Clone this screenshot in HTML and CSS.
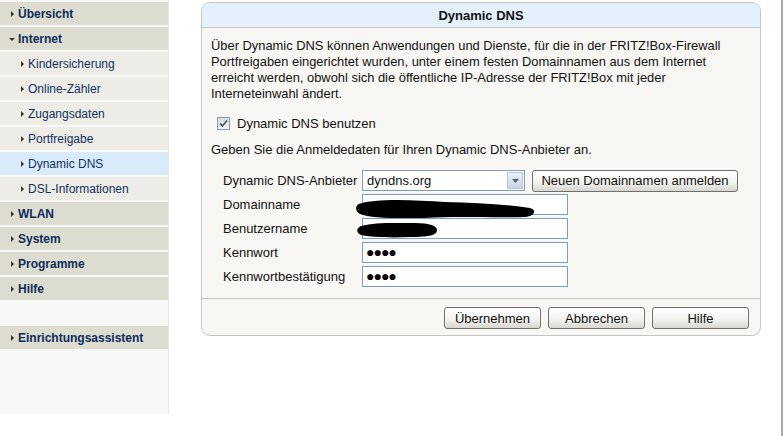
FILE: index.html
```html
<!DOCTYPE html>
<html lang="de">
<head>
  <meta charset="UTF-8">
  <title>Dynamic DNS</title>
  <link rel="stylesheet" href="styles.css">
</head>
<body>

  <div class="page">
    <ul class="menu">
      <li class="main"><a href="#">Übersicht</a></li>
      <li class="main open"><a href="#">Internet</a></li>
      <li class="sub"><a href="#">Kindersicherung</a></li>
      <li class="sub"><a href="#">Online-Zähler</a></li>
      <li class="sub"><a href="#">Zugangsdaten</a></li>
      <li class="sub"><a href="#">Portfreigabe</a></li>
      <li class="sub active"><a href="#">Dynamic DNS</a></li>
      <li class="sub"><a href="#">DSL-Informationen</a></li>
      <li class="main"><a href="#">WLAN</a></li>
      <li class="main"><a href="#">System</a></li>
      <li class="main"><a href="#">Programme</a></li>
      <li class="main"><a href="#">Hilfe</a></li>
      <li class="spacer"></li>
      <li class="main"><a href="#">Einrichtungsassistent</a></li>
    </ul>

    <div class="content">
      <div class="box">
        <div class="box-head">Dynamic DNS</div>
        <div class="box-body">
          <p class="intro">Über Dynamic DNS können Anwendungen und Dienste, für die in der FRITZ!Box-Firewall
            Portfreigaben eingerichtet wurden, unter einem festen Domainnamen aus dem Internet
            erreicht werden, obwohl sich die öffentliche IP-Adresse der FRITZ!Box mit jeder
            Interneteinwahl ändert.</p>

          <label class="check">
            <span class="checkbox"><svg width="9" height="9" viewBox="0 0 9 9"><path d="M1 4.5 L3.5 7 L8 1.5" fill="none" stroke="#4a5a7a" stroke-width="1.8"/></svg></span>
            Dynamic DNS benutzen
          </label>

          <p class="hint">Geben Sie die Anmeldedaten für Ihren Dynamic DNS-Anbieter an.</p>

          <div class="form">
            <div class="row">
              <label>Dynamic DNS-Anbieter</label>
              <div class="select">
                <span>dyndns.org</span>
                <span class="arrow"><svg width="7" height="4" viewBox="0 0 7 4"><path d="M0 0 H7 L3.5 4 Z" fill="#4d6185"/></svg></span>
              </div>
              <button class="btn wide">Neuen Domainnamen anmelden</button>
            </div>
            <div class="row">
              <label>Domainname</label>
              <div class="field">
                <svg class="scribble" width="190" height="24" viewBox="0 0 190 24">
                  <path d="M4 8 C20 2 60 4 90 6 C120 7 150 8 175 12 C182 14 180 20 170 21 C140 22 100 20 70 22 C40 23 15 22 5 18 C0 15 0 10 4 8 Z" fill="#000"/>
                </svg>
              </div>
            </div>
            <div class="row">
              <label>Benutzername</label>
              <div class="field">
                <svg class="scribble" width="90" height="20" viewBox="0 0 90 20">
                  <path d="M6 6 C20 2 40 3 60 3 C75 3 82 6 82 10 C82 15 75 17 55 17 C35 18 15 17 6 15 C1 13 1 8 6 6 Z" fill="#000"/>
                </svg>
              </div>
            </div>
            <div class="row">
              <label>Kennwort</label>
              <div class="field dots">●●●●</div>
            </div>
            <div class="row">
              <label>Kennwortbestätigung</label>
              <div class="field dots">●●●●</div>
            </div>
          </div>
        </div>
        <div class="box-foot">
          <button class="btn">Übernehmen</button>
          <button class="btn">Abbrechen</button>
          <button class="btn">Hilfe</button>
        </div>
      </div>
    </div>
  </div>

</body>
</html>
```

FILE: styles.css
```css
body {
  margin: 0;
  background: #fff;
  font-family: "Liberation Sans", Arial, sans-serif;
  font-size: 13px;
  color: #111;
}

.page {
  display: flex;
  height: 436px;
  width: 783px;
}

/* left navigation */
.menu {
  list-style: none;
  margin: 0;
  padding: 2px 0 0 0;
  width: 168px;
  height: 412px;
  background: #f8f8f7;
  border-right: 1px solid #e6e6e3;
  flex-shrink: 0;
}

.menu li {
  height: 23px;
  margin-bottom: 2px;
  display: flex;
  align-items: center;
}

.menu a {
  color: #13315f;
  text-decoration: none;
  position: relative;
}

.menu a::before {
  content: "";
  position: absolute;
  top: 4px;
  left: -7px;
  border-left: 3px solid #333;
  border-top: 3px solid transparent;
  border-bottom: 3px solid transparent;
}

.menu .main {
  background: #dddcd1;
  padding-left: 18px;
}

.menu .main a {
  font-weight: bold;
  font-size: 12px;
  color: #0e2c5a;
}

.menu .main.open a::before {
  top: 6px;
  left: -9px;
  border-top: 3px solid #333;
  border-left: 3px solid transparent;
  border-right: 3px solid transparent;
  border-bottom: 0;
}

.menu .sub {
  background: #edece6;
  padding-left: 28px;
}

.menu .sub a {
  font-size: 12px;
}

.menu .sub.active {
  background: #d9ebfa;
}

.menu .spacer {
  height: 22px;
  background: none;
}

/* main area */
.content {
  flex: 1;
  padding: 2px 0 0 32px;
  border-right: 2px solid #a6a6a6;
}

.box {
  width: 558px;
  border: 1px solid #c4c4c0;
  border-radius: 9px;
  background: #f8f7f3;
  overflow: hidden;
}

.box-head {
  height: 24px;
  line-height: 25px;
  background: #e3f1fc;
  border-bottom: 1px solid #c4c4c0;
  text-align: center;
  font-weight: bold;
  font-size: 13px;
}

.box-body {
  padding: 10px 9px 11px 9px;
}

.intro {
  margin: 0;
  line-height: 16px;
  font-size: 12.9px;
}

.check {
  display: flex;
  align-items: center;
  gap: 7px;
  margin: 14px 0 0 6px;
}

.checkbox {
  width: 11px;
  height: 11px;
  border: 1px solid #8c9cb4;
  background: linear-gradient(#dcdcd6, #f5f5f0);
  display: flex;
  align-items: center;
  justify-content: center;
}

.hint {
  margin: 11px 0 0 0;
}

.form {
  margin: 13px 0 0 12px;
  display: flex;
  flex-direction: column;
  gap: 3px;
}

.row {
  display: flex;
  align-items: center;
  height: 21px;
}

.row label {
  width: 139px;
}

.select {
  border: 1px solid #7f9db9;
  background: #fff;
  display: flex;
  align-items: center;
  justify-content: space-between;
  padding-left: 4px;
  box-sizing: border-box;
  width: 163px;
  height: 21px;
}

.arrow {
  width: 16px;
  height: 17px;
  margin-right: 1px;
  border: 1px solid #b7c4d6;
  box-sizing: border-box;
  background: linear-gradient(#eef2f8, #c9d4e6);
  display: flex;
  align-items: center;
  justify-content: center;
}

.field {
  width: 206px;
  height: 21px;
  border: 1px solid #7f9db9;
  background: #fff;
  box-sizing: border-box;
  position: relative;
}

.dots {
  font-size: 14px;
  line-height: 19px;
  padding-left: 3px;
  letter-spacing: -1px;
  color: #000;
}

.scribble {
  position: absolute;
  left: -8px;
  top: 1px;
}

.btn {
  font-family: "Liberation Sans", Arial, sans-serif;
  font-size: 13px;
  color: #111;
  height: 22px;
  width: 97px;
  padding: 0;
  border: 1px solid #6f6f6f;
  border-radius: 3px;
  background: linear-gradient(#ffffff, #f2f2ee 60%, #d6d5ce);
}

.btn.wide {
  width: 206px;
  margin-left: 7px;
}

.box-foot {
  border-top: 1px solid #c4c4c0;
  padding: 8px 11px 6px 0;
  display: flex;
  justify-content: flex-end;
  gap: 7px;
}
```
